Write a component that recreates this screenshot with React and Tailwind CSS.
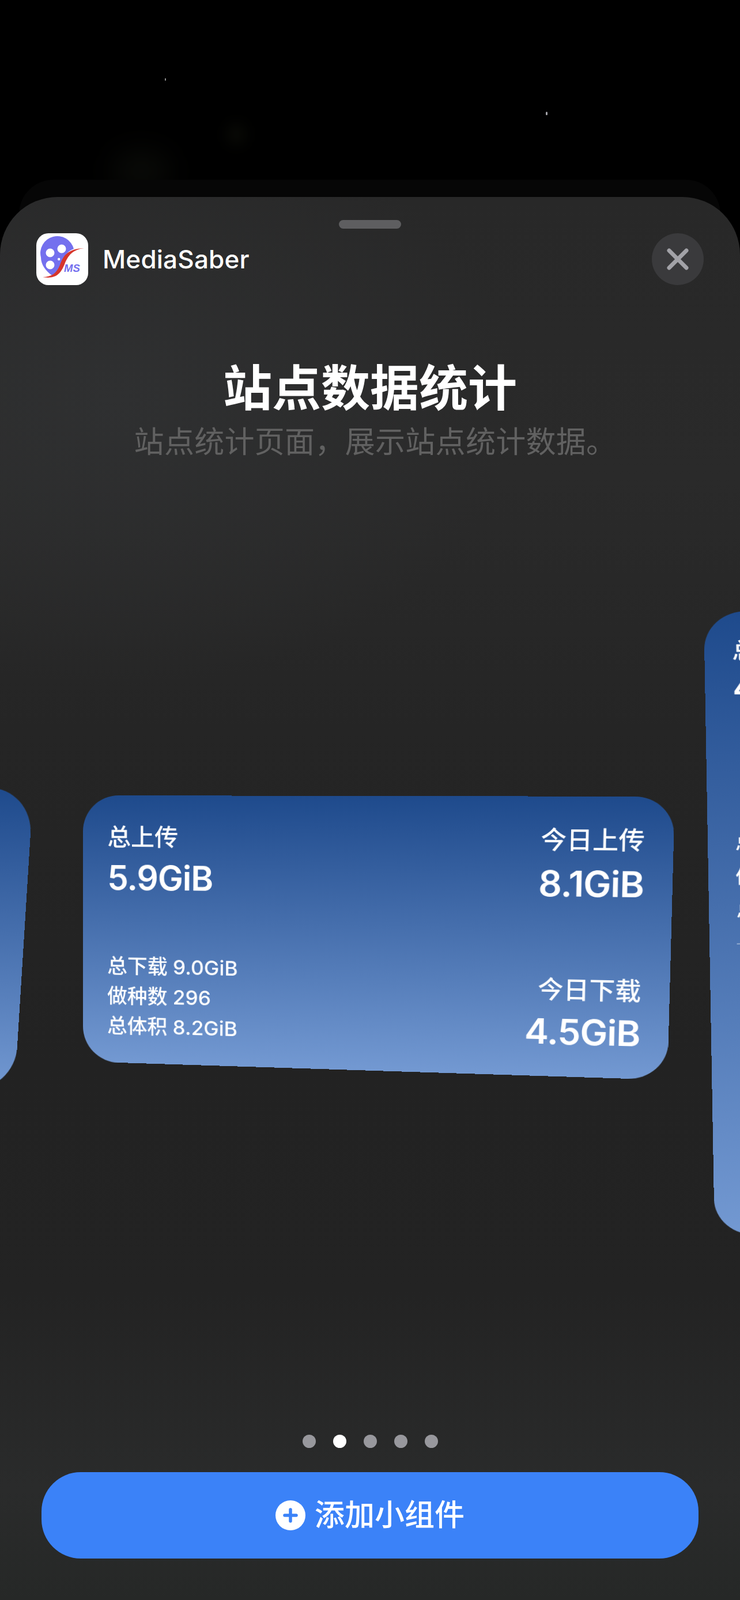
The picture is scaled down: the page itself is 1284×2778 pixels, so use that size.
const font = "font-['Inter','Noto_Sans_CJK_SC',sans-serif]";

function AppLogo() {
  return (
    <svg viewBox="0 0 90 90" className="w-[90px] h-[90px]">
      <rect width="90" height="90" rx="21" fill="#fff" />
      <path
        fillRule="evenodd"
        fill="#7470ee"
        d="M65 27 A29 29 0 0 0 8 42 C8 55 17 66 27 73 C33 71 37 68 40 63 C44 56 45 47 50 39 C54 33 59 29 65 27 Z
           M16.5 34 a7.5 7.5 0 1 0 15 0 a7.5 7.5 0 1 0 -15 0 Z
           M36.5 27 a7.5 7.5 0 1 0 15 0 a7.5 7.5 0 1 0 -15 0 Z
           M16.5 55 a7.5 7.5 0 1 0 15 0 a7.5 7.5 0 1 0 -15 0 Z
           M37 45 a2.2 2.2 0 1 0 4.4 0 a2.2 2.2 0 1 0 -4.4 0 Z"
      />
      <path
        fill="#d6352b"
        d="M11 76 C26 76 35 70 41 55 C47 38 55 27 83 26 C64 28 55 38 49 54 C42 71 33 80 11 76 Z"
      />
      <text x="48" y="67" fontFamily="Liberation Sans" fontStyle="italic" fontWeight="700" fontSize="18.5" fill="#7470ee">
        MS
      </text>
    </svg>
  );
}

export default function App() {
  return (
    <div className={`relative w-[1284px] h-[2778px] bg-black overflow-hidden pt-[342px] ${font}`}>
      {/* wallpaper specks */}
      <div className="absolute left-[286px] top-[136px] w-[2px] h-[4px] bg-[#8a8a8a]" />
      <div className="absolute left-[947px] top-[194px] w-[3px] h-[6px] rounded-full bg-[#a4a4aa]" />
      <div className="absolute left-[195px] top-[262px] w-[100px] h-[70px] rounded-full bg-[#090a07] blur-xl" />
      <div className="absolute left-[395px] top-[215px] w-[30px] h-[36px] rounded-full bg-[#0a0b06] blur-md" />
      {/* card stacked behind */}
      <div className="absolute left-[33px] top-[312px] w-[1217px] h-[120px] rounded-t-[60px] bg-[#060606]" />

      <div className="relative h-[2436px] rounded-t-[100px] overflow-hidden flex flex-col bg-[radial-gradient(ellipse_700px_500px_at_200px_350px,#2f3031_0%,transparent_100%),linear-gradient(180deg,#282828_0%,#2a2a2a_20%,#252525_38%,#222222_62%,#232323_78%,#2a2b2b_92%,#262827_100%)]">
        <div className="mt-[40px] mx-auto w-[108px] h-[15px] rounded-full bg-[#5e5e60]" />

        <div className="mt-[8px] px-[63px] flex items-center justify-between">
          <div className="flex items-center gap-[25px]">
            <AppLogo />
            <span className="text-[44px] font-medium text-white tracking-[0.2px]">MediaSaber</span>
          </div>
          <div className="w-[90px] h-[90px] rounded-full bg-[#3a3a3c] flex items-center justify-center">
            <svg viewBox="0 0 38 38" className="w-[38px] h-[38px]" fill="none" stroke="#a2a2a7" strokeWidth="7" strokeLinecap="round">
              <path d="M4 4 L34 34 M34 4 L4 34" />
            </svg>
          </div>
        </div>

        <h1 className="mt-[125px] text-center text-[85px] leading-[110px] font-bold text-white">站点数据统计</h1>
        <p className="mt-[3px] pl-[18px] text-center text-[52px] leading-[70px] tracking-[0.3px] text-[#616161]">站点统计页面，展示站点统计数据。</p>

        {/* main widget, tilted in perspective */}
        <div className="ml-[144px] mt-[578px] w-[1000px] h-[480px] shrink-0 origin-top-left [transform:matrix3d(0.9636,0.001876,0,-0.00006176,0,0.97417,0,0.00002506,0,0,1,0,0,0,0,1)] rounded-[64px] bg-gradient-to-b from-[#1e4a8c] to-[#7399d2] text-white pl-[44px] pr-[46px] pt-[48px] pb-[40px] flex justify-between">
          <div className="flex flex-col justify-between">
            <div>
              <div className="text-[42px] leading-[52px] font-medium">总上传</div>
              <div className="mt-[8px] text-[60px] leading-[76px] font-semibold tracking-[-1px]">5.9GiB</div>
            </div>
            <div className="text-[36px] leading-[54px] font-medium">
              <div>总下载 9.0GiB</div>
              <div>做种数 296</div>
              <div>总体积 8.2GiB</div>
            </div>
          </div>
          <div className="flex flex-col justify-between items-end">
            <div className="flex flex-col items-end">
              <div className="text-[42px] leading-[52px] font-medium">今日上传</div>
              <div className="mt-[10px] text-[60px] leading-[76px] font-semibold tracking-[-1px]">8.1GiB</div>
            </div>
            <div className="flex flex-col items-end">
              <div className="text-[42px] leading-[52px] font-medium">今日下载</div>
              <div className="mt-[8px] text-[60px] leading-[76px] font-semibold tracking-[-1px]">4.5GiB</div>
            </div>
          </div>
        </div>

        {/* neighbouring widgets peeking in from the sides */}
        <div className="absolute left-[-900px] top-[1033px] w-[1000px] h-[480px] origin-top-left rounded-[72px] bg-gradient-to-b from-[#1e4a8c] to-[#7399d2] [transform:matrix3d(0.8406,-0.00702,0,-0.00012258,0,0.99917,0,0.0000652,0,0,1,0,0,0,0,1)]" />
        <div className="absolute left-[1221px] top-[718px] w-[1000px] h-[1080px] origin-top-left rounded-[66px] [transform:matrix3d(1.1451,0.01804,0,0.00006127,0.01791,1.02454,0,0.00001659,0,0,1,0,0,0,0,1)] bg-gradient-to-b from-[#1e4a8c] to-[#7399d2] text-white pl-[42px] pt-[44px]">
          <div className="text-[38px] leading-[46px] font-medium">总上传</div>
          <div className="mt-[8px] text-[52px] leading-[66px] font-semibold">4.2GiB</div>
          <div className="mt-[204px] text-[32px] leading-[58px] font-medium">
            <div>总下载</div>
            <div>做种数</div>
            <div>总体积</div>
          </div>
          <div className="mt-[28px] h-[2px] bg-white/40" />
        </div>

        <div className="mt-auto flex justify-center gap-[30px]">
          <span className="w-[23px] h-[23px] rounded-full bg-[#98989d]" />
          <span className="w-[23px] h-[23px] rounded-full bg-white" />
          <span className="w-[23px] h-[23px] rounded-full bg-[#98989d]" />
          <span className="w-[23px] h-[23px] rounded-full bg-[#98989d]" />
          <span className="w-[23px] h-[23px] rounded-full bg-[#98989d]" />
        </div>

        <button className="mt-[42px] mb-[72px] mx-[72px] h-[150px] rounded-[68px] bg-[#3b82f8] text-white flex items-center justify-center gap-[16px] text-[52px] font-medium">
          <svg viewBox="0 0 52 52" className="w-[52px] h-[52px]">
            <circle cx="26" cy="26" r="26" fill="#fff" />
            <path d="M26 16 V36 M16 26 H36" stroke="#3b82f8" strokeWidth="5.5" strokeLinecap="round" />
          </svg>
          添加小组件
        </button>
      </div>
    </div>
  );
}
